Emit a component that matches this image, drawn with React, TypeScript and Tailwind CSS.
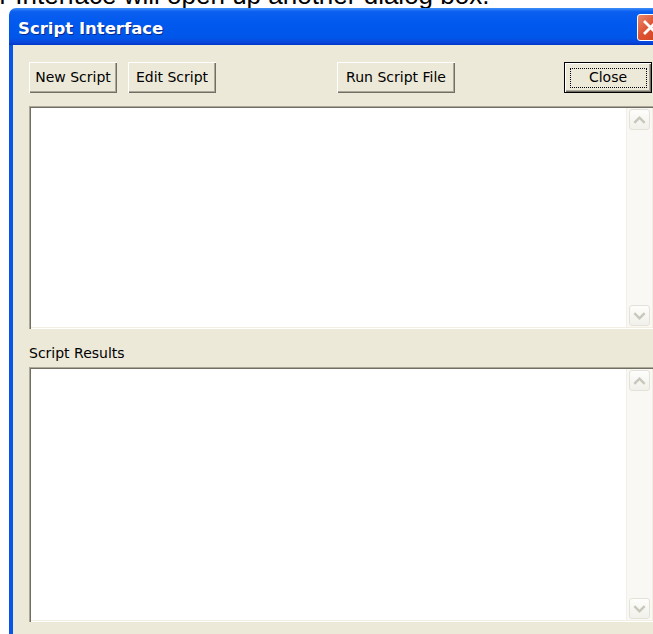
import React from "react";

const ui = "font-['Tahoma','DejaVu_Sans',sans-serif]";

function Chevron({ up }: { up?: boolean }) {
  return (
    <svg width="20" height="20" viewBox="0 0 20 20">
      <polyline
        points={up ? "5.5,12 10,7.5 14.5,12" : "5.5,8 10,12.5 14.5,8"}
        fill="none"
        stroke="#c9c7bb"
        strokeWidth="2.6"
        strokeLinecap="square"
      />
    </svg>
  );
}

function ScrollBtn({ up }: { up?: boolean }) {
  return (
    <div className="w-[21px] h-[21px] rounded-[3px] border border-[#e4e2d8] bg-[linear-gradient(to_bottom,#fdfdfb,#f1f0ea)] flex items-center justify-center">
      <Chevron up={up} />
    </div>
  );
}

function Pane({ tall }: { tall?: boolean }) {
  return (
    <div
      className={`flex w-[625px] ${tall ? "h-[255px]" : "h-[223px]"} bg-white p-[2px] shadow-[inset_1px_1px_0_#aca899,inset_2px_2px_0_#716f64,inset_-1px_-1px_0_#ffffff,inset_-2px_-2px_0_#f1efe2]`}
    >
      <div className="flex-1" />
      <div className="w-[26px] flex flex-col justify-between py-[1px] pl-[2px] bg-[#f9f8f4] border-l border-[#f0efe8]">
        <ScrollBtn up />
        <ScrollBtn />
      </div>
    </div>
  );
}

function Btn({ label, wide }: { label: string; wide?: boolean }) {
  return (
    <div
      className={`${wide ? "w-[118px]" : "w-[88px]"} h-[31px] flex items-center justify-center bg-[#ece9d8] text-[14px] text-black shadow-[inset_1px_1px_0_#ffffff,inset_-1px_-1px_0_#716f64,inset_-2px_-2px_0_#aca899]`}
    >
      {label}
    </div>
  );
}

export default function App() {
  return (
    <div className="relative w-[653px] h-[634px] overflow-hidden bg-white">
      {/* tail of the help text above the dialog */}
      <div className="h-[8px] overflow-hidden">
        <p className="ml-[-15px] mt-[-18px] whitespace-nowrap font-['Liberation_Sans',Arial,sans-serif] text-[26px] leading-[26px] text-black">
          er Interface will open up another dialog box.
        </p>
      </div>

      {/* dialog window */}
      <div className={`ml-[9px] w-[680px] ${ui}`}>
        <div className="flex h-[37px] items-center justify-between rounded-tl-[7px] bg-[linear-gradient(to_bottom,#3e8ef8_0%,#0b5ff0_10%,#0058ee_45%,#0056e9_80%,#0a48dc_92%,#0038c8_100%)] pl-[9px]">
          <span className="pt-[5px] text-[16.5px] font-bold text-white [text-shadow:1px_1px_0_#0a2a8a]">
            Script Interface
          </span>
          <div className="mr-[25px] mt-[1px] flex h-[27px] w-[27px] items-center justify-center rounded-[3px] border border-white bg-[linear-gradient(135deg,#eb8a6c,#dd5434_45%,#cf3f1c)]">
            <svg width="17" height="17" viewBox="0 0 17 17">
              <path d="M3 3 L14 14 M14 3 L3 14" stroke="#ffffff" strokeWidth="2.8" strokeLinecap="square" />
            </svg>
          </div>
        </div>

        <div className="bg-[#0a55e8] pl-[4px]">
          <div className="bg-[#ece9d8] pl-[16px] pt-[17px] pb-[20px]">
            <div className="flex items-center">
              <Btn label="New Script" />
              <div className="ml-[11px]">
                <Btn label="Edit Script" />
              </div>
              <div className="ml-[121px]">
                <Btn label="Run Script File" wide />
              </div>
              <div className="ml-[109px] flex h-[31px] w-[88px] items-center justify-center border border-black bg-[#ece9d8] text-[14px] text-black shadow-[inset_1px_1px_0_#ffffff,inset_-1px_-1px_0_#716f64,inset_-2px_-2px_0_#aca899]">
                <div className="flex h-[20px] w-[77px] items-center justify-center border border-dotted border-black">
                  Close
                </div>
              </div>
            </div>

            <div className="mt-[13px]">
              <Pane />
            </div>

            <div className="h-[38px] pt-[16px] text-[14px] leading-[17px] text-black">
              Script Results
            </div>

            <Pane tall />
          </div>
        </div>
      </div>
    </div>
  );
}
